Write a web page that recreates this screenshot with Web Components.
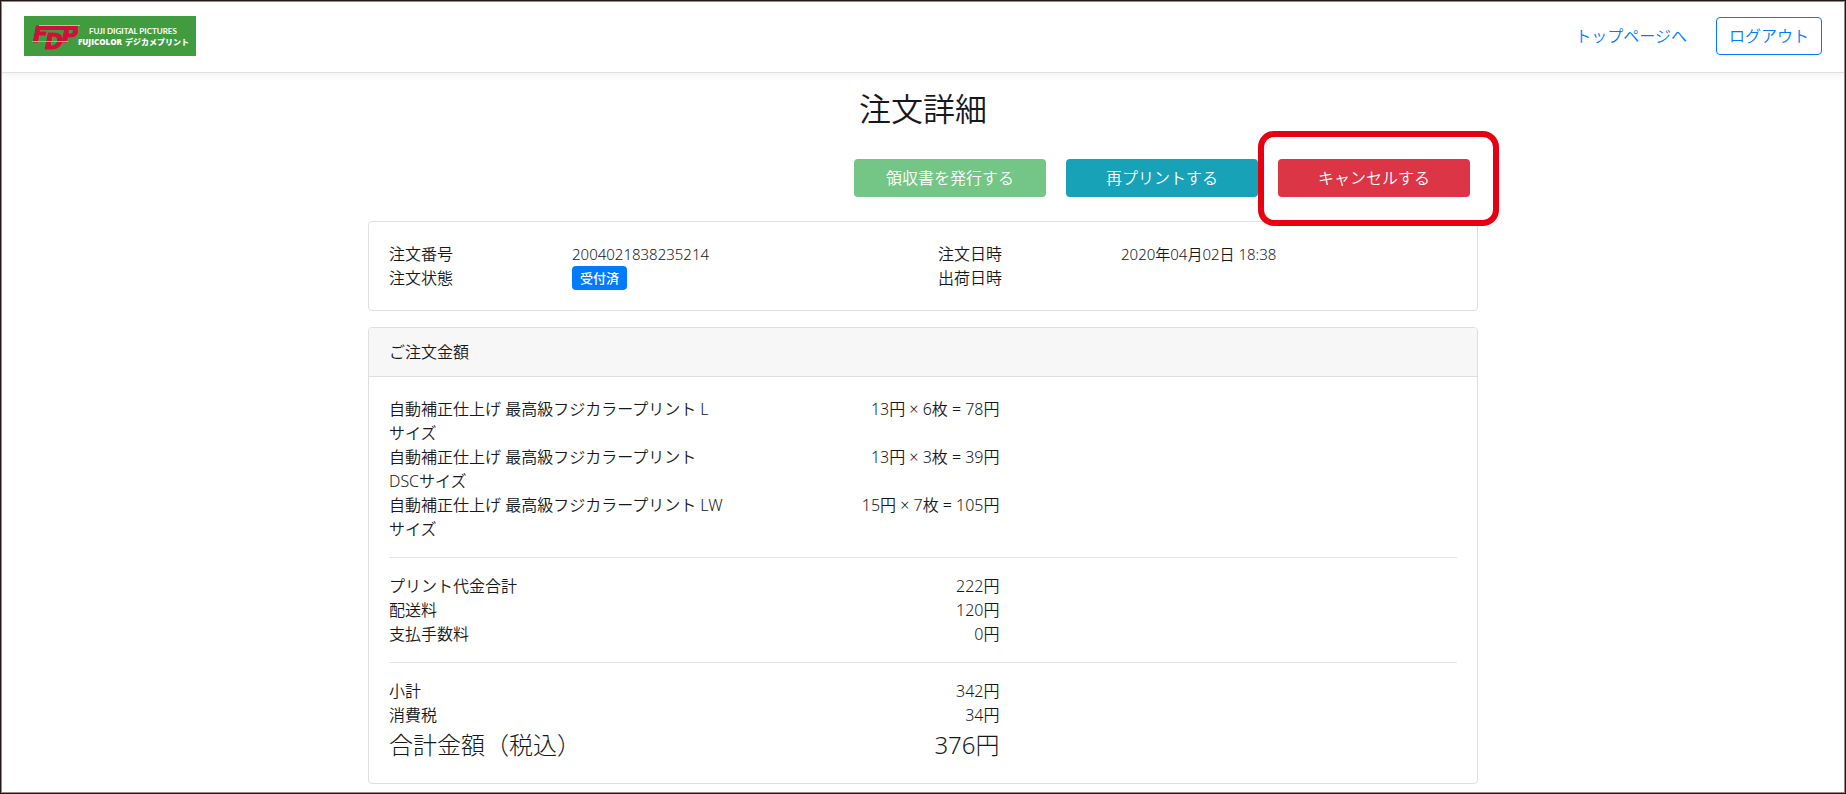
<!DOCTYPE html>
<html lang="ja">
<head>
<meta charset="utf-8">
<meta name="viewport" content="width=device-width, initial-scale=1">
<title>注文詳細</title>
<style>
  body {
    margin: 0;
    background: #fff;
    color: #16191c;
    font: 350 16px/24px "Noto Sans", "Noto Sans CJK JP", sans-serif;
  }
</style>
</head>
<body>
<order-page></order-page>

<script>
const define = (name, html) => {
  const template = document.createElement('template');
  template.innerHTML = html;
  customElements.define(name, class extends HTMLElement {
    constructor() {
      super();
      this.attachShadow({ mode: 'open' }).append(template.content.cloneNode(true));
    }
  });
};

define('shop-logo', `
  <style>
    :host { display: block; width: 172px; height: 40px; }
    svg { display: block; }
    .mark { font: italic 700 22px "DejaVu Sans", sans-serif; fill: #d0103a; stroke: #d0103a; stroke-width: 1; }
    .line { font: 700 8px Lato, sans-serif; fill: #fff; }
    .name { font: 800 8px "Open Sans", sans-serif; fill: #fff; }
    .kana { font: 900 8px "Noto Sans CJK JP", sans-serif; fill: #fff; }
  </style>
  <svg width="172" height="40" viewBox="0 0 172 40" role="img" aria-label="FUJICOLOR デジカメプリント">
    <rect width="172" height="40" fill="#419c3f"/>
    <text class="mark" x="9 21 38" y="26 33 26">FDP</text>
    <path d="M14 10H54L53 14H13Z" fill="#d0103a"/>
    <path d="M15 9.500H56" stroke="#f3a3ad"/>
    <path d="M8 25.500H44" stroke="#f08a98"/>
    <text class="line" x="65" y="18">FUJI DIGITAL PICTURES</text>
    <text class="name" x="54" y="29">FUJICOLOR</text>
    <text class="kana" x="101" y="29">デジカメプリント</text>
  </svg>`);

define('site-header', `
  <style>
    :host { display: block; }
    header {
      display: flex; align-items: center; gap: 29px;
      padding: 16px 24px;
      border-bottom: 1px solid #dee2e6;
      box-shadow: 0 2px 8px rgba(0, 0, 0, .06);
    }
    .home { margin-right: auto; }
    .top { color: #007bff; text-decoration: none; }
    button {
      font: inherit; color: #007bff; background: transparent;
      border: 1px solid #007bff; border-radius: 4px; padding: 6px 12px;
    }
  </style>
  <header>
    <a class="home" href="#"><shop-logo></shop-logo></a>
    <a class="top" href="#">トップページへ</a>
    <button type="button">ログアウト</button>
  </header>`);

define('action-button', `
  <style>
    :host { display: block; width: 192px; position: relative; }
    button {
      display: block; width: 100%; font: inherit; color: #fff;
      border: 0; border-radius: 4px; padding: 7px 12px;
      background: var(--tone);
    }
    :host([marked])::after {
      content: ""; position: absolute; inset: -28px -29px -29px -20px;
      border: 6px solid #e60012; border-radius: 16px; pointer-events: none;
    }
  </style>
  <button type="button"><slot></slot></button>`);

define('info-card', `
  <style>
    :host { display: block; border: 1px solid #dfdfdf; border-radius: 4px; }
    ::slotted([slot=heading]) {
      display: block; margin: 0; padding: 12px 20px; background: #f7f7f7;
      border-bottom: 1px solid #dfdfdf; border-radius: 3px 3px 0 0;
      font: inherit;
    }
    .body { padding: 20px; }
  </style>
  <slot name="heading"></slot>
  <div class="body"><slot></slot></div>`);

define('status-badge', `
  <style>
    :host {
      display: inline-block; vertical-align: top; box-sizing: border-box;
      height: 24px; padding: 0 8px; border-radius: 4px;
      background: #007bff; color: #fff; font-size: 13px; font-weight: 500;
    }
  </style>
  <slot></slot>`);

define('order-summary', `
  <style>
    :host { display: block; }
    dl { display: grid; grid-template-columns: repeat(12, 1fr); column-gap: 30px; margin: 0; }
    dt { grid-column: span 2; }
    dd { grid-column: span 4; margin: 0; }
    .number { font-size: 15px; }
  </style>
  <dl>
    <dt>注文番号</dt><dd class="number">2004021838235214</dd>
    <dt>注文日時</dt><dd class="number">2020年04月02日 18:38</dd>
    <dt>注文状態</dt><dd><status-badge>受付済</status-badge></dd>
    <dt>出荷日時</dt><dd></dd>
  </dl>`);

define('price-breakdown', `
  <style>
    :host { display: block; }
    dl { display: grid; grid-template-columns: repeat(12, 1fr); column-gap: 30px; margin: 0; }
    dt { grid-column: 1 / span 4; }
    dd { grid-column: 5 / span 3; margin: 0; text-align: right; }
    hr { margin: 16px 0; border: 0; border-top: 1px solid #e5e5e5; }
    .total { font-size: 24px; line-height: 36px; font-weight: 300; }
  </style>
  <dl>
    <dt>自動補正仕上げ 最高級フジカラープリント L<br>サイズ</dt><dd>13円 × 6枚 = 78円</dd>
    <dt>自動補正仕上げ 最高級フジカラープリント<br>DSCサイズ</dt><dd>13円 × 3枚 = 39円</dd>
    <dt>自動補正仕上げ 最高級フジカラープリント LW<br>サイズ</dt><dd>15円 × 7枚 = 105円</dd>
  </dl>
  <hr>
  <dl>
    <dt>プリント代金合計</dt><dd>222円</dd>
    <dt>配送料</dt><dd>120円</dd>
    <dt>支払手数料</dt><dd>0円</dd>
  </dl>
  <hr>
  <dl>
    <dt>小計</dt><dd>342円</dd>
    <dt>消費税</dt><dd>34円</dd>
    <dt class="total">合計金額（税込）</dt><dd class="total">376円</dd>
  </dl>`);

define('order-page', `
  <style>
    :host { display: block; box-sizing: border-box; min-height: 100vh; }
    .frame {
      position: fixed; inset: 0; pointer-events: none;
      border: 1px solid #231815; box-shadow: inset 0 0 0 1px #918b8a;
    }
    main { max-width: 1110px; margin: 0 auto; padding: 16px 15px 8px; }
    h1 { margin: 0 0 30px; font-size: 32px; line-height: 40px; font-weight: 350; text-align: center; }
    .actions { display: flex; flex-wrap: wrap; justify-content: flex-end; gap: 20px; padding-right: 8px; margin-bottom: 24px; }
    info-card + info-card { margin-top: 16px; }
    .receipt { --tone: #74c687; }
    .reprint { --tone: #17a2b8; }
    .cancel { --tone: #dc3545; }
  </style>
  <site-header></site-header>
  <main>
    <h1>注文詳細</h1>
    <div class="actions">
      <action-button class="receipt">領収書を発行する</action-button>
      <action-button class="reprint">再プリントする</action-button>
      <action-button class="cancel" marked>キャンセルする</action-button>
    </div>
    <info-card><order-summary></order-summary></info-card>
    <info-card>
      <h2 slot="heading">ご注文金額</h2>
      <price-breakdown></price-breakdown>
    </info-card>
  </main>
  <div class="frame"></div>`);
</script>
</body>
</html>
